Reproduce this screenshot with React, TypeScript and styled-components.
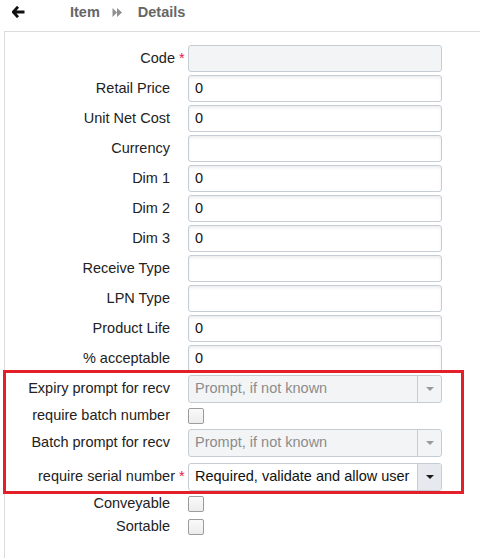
import React from "react";
import styled, { createGlobalStyle } from "styled-components";

const Global = createGlobalStyle`
  html, body { margin: 0; padding: 0; background: #fff; overflow: hidden; }
  body { font-family: "Liberation Sans", Arial, sans-serif; font-size: 14.5px; color: #222; }
`;

const Page = styled.div`
  width: 480px;
  height: 558px;
  overflow: hidden;
`;

const Header = styled.div`
  height: 24px;
  display: flex;
  align-items: center;
  padding-left: 12px;
`;

const BackButton = styled.span`
  display: inline-flex;
  width: 13px;
  height: 12px;
  margin-right: 45px;
`;

const Crumb = styled.span`
  font-weight: bold;
  font-size: 14.5px;
  color: #666;
`;

const CrumbSep = styled.span`
  display: inline-flex;
  margin: 0 15px 0 12px;
`;

const Panel = styled.div`
  margin: 7px 0 0 4px;
  border-top: 1px solid #dcdcdc;
  border-left: 1px solid #dcdcdc;
  height: 600px;
  padding-top: 13px;
  box-sizing: border-box;
`;

const Form = styled.div`
  display: grid;
  grid-template-columns: 183px 254px;
  row-gap: 3px;
`;

const Group = styled.div`
  grid-column: 1 / -1;
  display: grid;
  grid-template-columns: 183px 254px;
  row-gap: 3px;
  position: relative;
  &::after {
    content: "";
    position: absolute;
    top: -5px;
    bottom: -3px;
    left: -2px;
    width: 461px;
    box-sizing: border-box;
    border: 3px solid #e3202a;
    pointer-events: none;
  }
`;

const Label = styled.div<{ $required?: boolean; $h: number; $mt?: number }>`
  display: flex;
  align-items: center;
  justify-content: flex-end;
  box-sizing: border-box;
  height: ${(p) => p.$h}px;
  margin-top: ${(p) => p.$mt ?? 0}px;
  padding-right: ${(p) => (p.$required ? 0 : 18)}px;
  padding-bottom: 2px;
  white-space: nowrap;
  color: #222;
`;

const Star = styled.span`
  color: #e8174a;
  margin-left: 4px;
  width: 9px;
`;

const Cell = styled.div<{ $h: number; $mt?: number }>`
  display: flex;
  align-items: center;
  height: ${(p) => p.$h}px;
  margin-top: ${(p) => p.$mt ?? 0}px;
`;

const TextInput = styled.div<{ $disabled?: boolean }>`
  width: 254px;
  height: 27px;
  box-sizing: border-box;
  border: 1px solid #c6ccd3;
  border-radius: 3px;
  background: ${(p) => (p.$disabled ? "#f3f4f6" : "#fff")};
  box-shadow: ${(p) => (p.$disabled ? "none" : "inset 0 2px 3px rgba(0,0,0,0.07)")};
  padding: 0 0 2px 6px;
  display: flex;
  align-items: center;
  color: #111;
`;

const Select = styled.div<{ $disabled?: boolean }>`
  width: 254px;
  height: 28px;
  box-sizing: border-box;
  border: 1px solid #c6ccd3;
  border-radius: 3px;
  background: ${(p) => (p.$disabled ? "#f3f4f6" : "#fff")};
  display: flex;
  align-items: stretch;
  overflow: hidden;
`;

const SelectText = styled.div<{ $disabled?: boolean }>`
  flex: 1;
  display: flex;
  align-items: center;
  padding: 0 0 2px 6px;
  color: ${(p) => (p.$disabled ? "#8c8c8c" : "#111")};
  white-space: nowrap;
  overflow: hidden;
`;

const SelectArrow = styled.div<{ $disabled?: boolean }>`
  width: 23px;
  border-left: 1px solid #c6ccd3;
  background: ${(p) => (p.$disabled ? "transparent" : "#e6e9ed")};
  display: flex;
  align-items: center;
  justify-content: center;
  &::before {
    content: "";
    border-left: 4px solid transparent;
    border-right: 4px solid transparent;
    border-top: 4px solid ${(p) => (p.$disabled ? "#9a9a9a" : "#1a1a1a")};
  }
`;

const Checkbox = styled.div`
  width: 16px;
  height: 16px;
  box-sizing: border-box;
  border: 1px solid #9c9c9c;
  border-radius: 2px;
  background: linear-gradient(#fafafa, #ececec);
`;

type InputDef = { label: string; value?: string; disabled?: boolean; required?: boolean };

const rows: InputDef[] = [
  { label: "Code", disabled: true, required: true },
  { label: "Retail Price", value: "0" },
  { label: "Unit Net Cost", value: "0" },
  { label: "Currency" },
  { label: "Dim 1", value: "0" },
  { label: "Dim 2", value: "0" },
  { label: "Dim 3", value: "0" },
  { label: "Receive Type" },
  { label: "LPN Type" },
  { label: "Product Life", value: "0" },
  { label: "% acceptable", value: "0" },
];

function InputRow({ label, value, disabled, required }: InputDef) {
  return (
    <>
      <Label $h={27} $required={required}>
        {label}
        {required && <Star>*</Star>}
      </Label>
      <Cell $h={27}>
        <TextInput $disabled={disabled}>{value}</TextInput>
      </Cell>
    </>
  );
}

function SelectRow({ label, value, disabled, required, mt }: { label: string; value: string; disabled?: boolean; required?: boolean; mt?: number }) {
  return (
    <>
      <Label $h={28} $required={required} $mt={mt}>
        {label}
        {required && <Star>*</Star>}
      </Label>
      <Cell $h={28} $mt={mt}>
        <Select $disabled={disabled}>
          <SelectText $disabled={disabled}>{value}</SelectText>
          <SelectArrow $disabled={disabled} />
        </Select>
      </Cell>
    </>
  );
}

function CheckRow({ label, h = 20 }: { label: string; h?: number }) {
  return (
    <>
      <Label $h={h}>{label}</Label>
      <Cell $h={h}>
        <Checkbox />
      </Cell>
    </>
  );
}

export default function App() {
  return (
    <Page>
      <Global />
      <Header>
        <BackButton>
          <svg width="13" height="12" viewBox="0 0 13 12">
            <path d="M6 0.8 L1.2 6 L6 11.2 M1.5 6 H12.5" stroke="#111" strokeWidth="2.8" fill="none" strokeLinejoin="miter" />
          </svg>
        </BackButton>
        <Crumb>Item</Crumb>
        <CrumbSep>
          <svg width="11" height="11" viewBox="0 0 11 11">
            <path d="M0.5 1 L5 5.5 L0.5 10 Z M5 1 L10 5.5 L5 10 Z" fill="#909090" />
          </svg>
        </CrumbSep>
        <Crumb>Details</Crumb>
      </Header>
      <Panel>
        <Form>
          {rows.map((r) => (
            <InputRow key={r.label} {...r} />
          ))}
          <Group>
            <SelectRow label="Expiry prompt for recv" value="Prompt, if not known" disabled />
            <CheckRow label="require batch number" />
            <SelectRow label="Batch prompt for recv" value="Prompt, if not known" disabled />
            <SelectRow label="require serial number" value="Required, validate and allow user" required mt={3} />
          </Group>
          <CheckRow label="Conveyable" />
          <CheckRow label="Sortable" />
        </Form>
      </Panel>
    </Page>
  );
}
